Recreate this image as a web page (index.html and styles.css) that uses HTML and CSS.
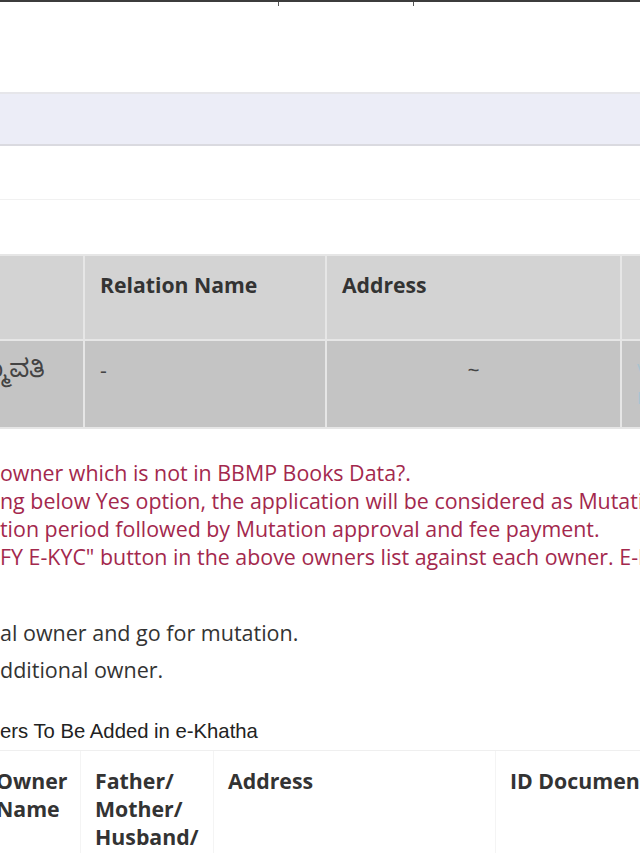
FILE: index.html
```html
<!DOCTYPE html>
<html lang="en">
<head>
<meta charset="utf-8">
<title>e-Khatha owners</title>
<link rel="stylesheet" href="styles.css">
</head>
<body>
<div class="page">
  <div class="topbar"><span class="tick t1"></span><span class="tick t2"></span></div>
  <div class="band"></div>
  <div class="rule"></div>

  <table class="owners">
    <tr class="head">
      <th class="c0"></th>
      <th class="c1">Relation Name</th>
      <th class="c2">Address</th>
      <th class="c3"></th>
    </tr>
    <tr class="row">
      <td class="c0"><span class="kn">ಪದ್ಮಾವತಿ</span></td>
      <td class="c1">-</td>
      <td class="c2 center">~</td>
      <td class="c3"><span class="verify">VERIFY<br>E-KYC</span></td>
    </tr>
  </table>

  <div class="notice">
    <div class="line">owner which is not in BBMP Books Data?.</div>
    <div class="line">ng below Yes option, the application will be considered as Mutation</div>
    <div class="line">tion period followed by Mutation approval and fee payment.</div>
    <div class="line">FY E-KYC" button in the above owners list against each owner. E-KYC</div>
  </div>

  <div class="options">
    <div class="opt">al owner and go for mutation.</div>
    <div class="opt">dditional owner.</div>
  </div>

  <div class="caption">ers To Be Added in e-Khatha</div>

  <table class="added">
    <tr>
      <th class="a0"><span class="clip">Owner Name</span></th>
      <th class="a1">Father/ Mother/ Husband/</th>
      <th class="a2">Address</th>
      <th class="a3">ID Document Number</th>
    </tr>
  </table>
</div>
</body>
</html>
```
FILE: styles.css
```css
html, body {
  margin: 0;
  padding: 0;
  background: #ffffff;
}
body {
  width: 640px;
  height: 853px;
  overflow: hidden;
  font-family: "Open Sans", "Noto Sans", sans-serif;
  color: #333333;
}
.page {
  width: 640px;
  overflow: hidden;
}
.topbar {
  height: 4px;
  border-top: 2px solid #3c3c3c;
  display: flex;
  padding-left: 278px;
}
.tick {
  width: 1px;
  height: 4px;
  background: #555555;
}
.t2 {
  margin-left: 134px;
}
.band {
  margin-top: 86px;
  height: 50px;
  background: #ecedf7;
  border-top: 2px solid #e6e6ea;
  border-bottom: 2px solid #dadae0;
}
.rule {
  margin-top: 53px;
  border-top: 1px solid #f1f1f1;
}

.owners {
  margin-top: 54px;
  margin-left: -116px;
  border-collapse: collapse;
  font-size: 21.2px;
  line-height: 28px;
  table-layout: fixed;
  width: 1000px;
}
.owners th, .owners td {
  border: 2px solid #e6e6e6;
  padding: 15px 15px;
  text-align: left;
  vertical-align: top;
  white-space: nowrap;
  overflow: hidden;
}
.owners tr {
  height: 85px;
}
.owners .head th {
  background: #d3d3d3;
  font-weight: 700;
  color: #333333;
}
.owners .row td {
  background: #c4c4c4;
  color: #444444;
}
.owners .c0 { width: 167px; }
.owners .c1 { width: 210px; }
.owners .c2 { width: 263px; }
.owners .c3 { width: 300px; }
.center { text-align: center !important; }
.kn {
  display: block;
  font-family: "Noto Sans Kannada", "Noto Sans", sans-serif;
  font-weight: 400;
  font-size: 25px;
  line-height: 28px;
  margin-top: 4px;
  margin-left: 52px;
}
.verify {
  display: block;
  color: #a9c3d0;
  font-size: 17px;
  line-height: 28px;
}

.notice {
  margin-top: 30px;
  font-size: 21.4px;
  line-height: 28px;
  color: #a3284d;
  white-space: nowrap;
}
.options {
  margin-top: 43px;
  font-size: 21.5px;
  color: #333333;
  white-space: nowrap;
}
.opt {
  line-height: 37px;
}
.caption {
  margin-top: 29px;
  font-family: "Liberation Sans", Arial, sans-serif;
  font-size: 20.3px;
  line-height: 28px;
  color: #222222;
  white-space: nowrap;
}
.added {
  margin-top: 5px;
  margin-left: -16px;
  border-collapse: collapse;
  table-layout: fixed;
  width: 1px;
  font-size: 21.3px;
  line-height: 28px;
}
.added th {
  border-top: 1px solid #efefef;
  border-left: 1px solid #f4f4f4;
  padding: 16px 14px;
  text-align: left;
  vertical-align: top;
  font-weight: 700;
  color: #333333;
}
.added .a0 { width: 67px; }
.added .a1 { width: 104px; }
.added .a2 { width: 253px; }
.added .a3 { width: 250px; }
.clip {
  display: block;
  margin-left: -3px;
}
```
